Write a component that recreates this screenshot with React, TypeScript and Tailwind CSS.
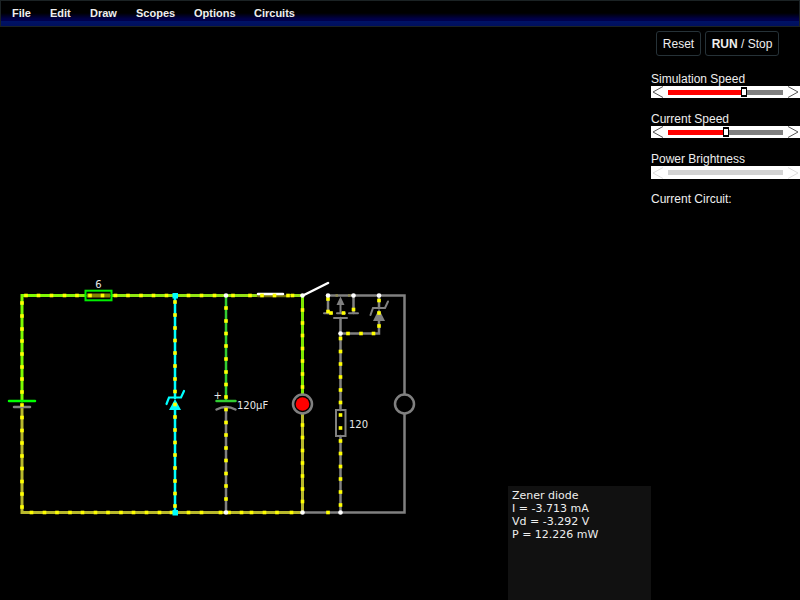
import { useState } from 'react';

interface MenuEntry {
  label: string;
  width: string;
}

const MENUS: MenuEntry[] = [
  { label: 'File', width: 'w-[38px]' },
  { label: 'Edit', width: 'w-10' },
  { label: 'Draw', width: 'w-[46px]' },
  { label: 'Scopes', width: 'w-[58px]' },
  { label: 'Options', width: 'w-[60px]' },
  { label: 'Circuits', width: 'w-[60px]' },
];

const READINGS = ['Zener diode', 'I = -3.713 mA', 'Vd = -3.292 V', 'P = 12.226 mW'];

type Point = [number, number];

// Current dots on vertical wires: x, then every y
const VERTICAL_DOTS: [number, number[]][] = [
  [22, [303, 316, 329, 341, 354, 367, 379, 392, 405, 417.5, 430.5, 443, 456, 468.5, 481.5, 494, 507]],
  [175, [302, 315, 328, 340.5, 353, 366, 379, 391.5, 404.5, 417, 430, 442.5, 455, 468, 481, 493.5, 506]],
  [226, [308, 321, 333.5, 346, 359, 372, 384.5, 397, 409.5, 422.5, 435, 448, 460.5, 473.5, 486, 499]],
  [302.5, [310, 323, 335.5, 348.5, 361, 374, 387, 425, 437.5, 450.5, 463, 476, 489, 501.5]],
  [340.5, [338.5, 351.5, 364, 377, 390, 402.5, 415, 428, 441, 453.5, 466.5, 479, 492, 505]],
  [328, [299, 311.5]],
  [353.5, [309.5]],
  [379, [300.5, 313, 326]],
];

// Current dots on horizontal wires: y, then every x
const HORIZONTAL_DOTS: [number, number[]][] = [
  [295.5, [26, 38.5, 51.5, 64.5, 77, 90, 102.5, 115.5, 128, 141, 153.5, 166.5, 188.5, 201.5, 214.5, 233, 250, 262, 274.5, 288, 292.5]],
  [512.5, [31.5, 44.5, 57, 70, 82.5, 95.5, 108, 121, 133.5, 146.5, 159.5, 171.5, 188.5, 201.5, 220.5, 229, 241.5, 251.5, 264.5, 277, 291.5, 328]],
  [313, [331, 343.5]],
  [333.5, [348, 361, 373.5]],
];

const POSTS: Point[] = [
  [226, 295.5], [302.5, 295.5], [328, 295.5], [353.5, 295.5], [379, 295.5],
  [340.5, 333.5], [226, 512.5], [302.5, 512.5], [340.5, 512.5],
];

function Dot({ x, y }: { x: number; y: number }) {
  return <rect x={x - 1.8} y={y - 1.8} width="3.6" height="3.6" fill="#ffff00" />;
}

function Circuit() {
  return (
    <svg
      viewBox="0 270 420 330"
      className="h-[330px] w-[420px] shrink-0"
      fill="none"
      strokeWidth="2.5"
      strokeLinecap="round"
      role="img"
      aria-label="Circuit"
    >
      <defs>
        <linearGradient id="supply" gradientUnits="userSpaceOnUse" x1="22" y1="0" x2="302" y2="0">
          <stop offset="0" stopColor="#7dfc00" />
          <stop offset="0.3" stopColor="#8fea10" />
          <stop offset="1" stopColor="#96dc18" />
        </linearGradient>
      </defs>

      {/* return path */}
      <path d="M22 407V512.5H302" stroke="#b8b82c" strokeWidth="3" />
      <path d="M302.5 414V512" stroke="#b8b82c" strokeWidth="3" />
      {/* supply rail */}
      <path d="M22 401V295.5H85M112 295.5H258M290 295.5H302" stroke="url(#supply)" strokeWidth="3" />
      <path d="M302.5 296V394" stroke="#7ee800" strokeWidth="3" />
      <path d="M258 296H290" stroke="#75750a" />

      {/* idle wires */}
      <g stroke="#808080">
        <path d="M302 512.5H404.5V414M404.5 394V295.5H328" />
        <path d="M226 409V512" />
        <path d="M340.5 318V410M340.5 436V512M341 333.5H379V319M379 308V296" />
        <path d="M328 296V313M353.5 296V313" />
      </g>
      <path d="M335.5 295.5H338M348 295.5H350.5" stroke="#8f8a50" strokeLinecap="butt" />

      {/* battery */}
      <path d="M9 401H35" stroke="#00ff00" />
      <path d="M14 407H30" stroke="#808080" />

      {/* 6 ohm resistor */}
      <path d="M87 295.5H110" stroke="#858500" strokeWidth="4" strokeLinecap="butt" />
      <rect x="85.5" y="290.7" width="26" height="9.6" stroke="#00ee00" strokeWidth="2" />

      {/* zener, selected */}
      <g stroke="#00ffff">
        <path d="M175 296V398M175 409V512" />
        <path d="M166.5 404L169 397.5H181L184 391" strokeWidth="2.2" />
        <path d="M175 399L169 410H181Z" fill="#00ffff" stroke="none" />
      </g>

      {/* capacitor */}
      <path d="M226 296V401M216.5 401H235.5" stroke="#32cc32" />
      <path d="M216.5 409.5Q226 404.5 235.5 409.5" stroke="#808080" />

      {/* switch */}
      <path d="M258 294H283" stroke="#ffffff" />
      <path d="M303 295.5L328 283" stroke="#ffffff" />

      {/* mosfet */}
      <g stroke="#808080" strokeWidth="2">
        <path d="M324 313.2H332M337 313.2H345M349 313.2H358M334 318H347M340.5 302V313" />
        <path d="M340.5 296.5L336.5 305H344.5Z" fill="#808080" stroke="none" />
      </g>

      {/* body diode */}
      <path d="M370.5 315L373 308H385L388 301.5" stroke="#808080" strokeWidth="2" />
      <path d="M379 309L373 321H385Z" fill="#808080" />

      {/* lamp, 120 ohm load, meter */}
      <circle cx="302.5" cy="404" r="9.5" stroke="#808080" />
      <circle cx="302.5" cy="404" r="6.8" fill="#ff0000" />
      <rect x="336" y="410" width="9.5" height="26" stroke="#808080" strokeWidth="2" />
      <circle cx="404.5" cy="404" r="9.5" stroke="#808080" />

      {VERTICAL_DOTS.map(([x, ys]) => ys.map((y) => <Dot key={`v${x}-${y}`} x={x} y={y} />))}
      {HORIZONTAL_DOTS.map(([y, xs]) => xs.map((x) => <Dot key={`h${y}-${x}`} x={x} y={y} />))}
      {POSTS.map(([x, y]) => (
        <circle key={`${x}-${y}`} cx={x} cy={y} r="2.3" fill="#ffffff" />
      ))}
      <rect x="172.5" y="293" width="5.5" height="5.5" fill="#00ffff" />
      <rect x="172.5" y="510" width="5.5" height="5.5" fill="#00ffff" />

      <g fill="#e8e8e8" fontFamily="'DejaVu Sans', sans-serif" fontSize="10">
        <text x="98.5" y="288" textAnchor="middle">6</text>
        <text x="213.5" y="399">+</text>
        <text x="237" y="409">120μF</text>
        <text x="349" y="428">120</text>
      </g>
    </svg>
  );
}

interface ScrollSliderProps {
  label: string;
  initial: number;
  disabled?: boolean;
}

function ScrollSlider({ label, initial, disabled }: ScrollSliderProps) {
  const [value, setValue] = useState(initial);
  const arrowColor = disabled ? '#dddddd' : '#555555';

  return (
    <div className="h-10">
      <label className="block text-[12px] leading-[14px]">
        {label}
        <span className={disabled ? 'flex h-[13px] items-center bg-white' : 'flex h-3 items-center bg-white'}>
          <svg viewBox="0 0 17 12" className="h-3 w-[17px] shrink-0" fill="none" stroke={arrowColor}>
            <path d="M12 0.5L2 6L12 11.5" />
          </svg>
          <span className="grid min-w-0 flex-1 items-center">
            <span className={disabled ? 'col-start-1 row-start-1 h-[5px] bg-[#d3d3d3]' : 'col-start-1 row-start-1 h-[5px] bg-[#808080]'}>
              {!disabled && <span className="block h-[5px] bg-[#ff0000]" style={{ width: `${value}%` }} />}
            </span>
            <input
              type="range"
              min={0}
              max={100}
              value={value}
              disabled={disabled}
              onChange={(e) => setValue(Number(e.target.value))}
              className={
                disabled
                  ? 'col-start-1 row-start-1 h-3 w-full appearance-none bg-transparent [&::-webkit-slider-thumb]:invisible'
                  : 'col-start-1 row-start-1 h-3 w-full appearance-none bg-transparent [&::-webkit-slider-thumb]:h-[10px] [&::-webkit-slider-thumb]:w-[6px] [&::-webkit-slider-thumb]:appearance-none [&::-webkit-slider-thumb]:border-2 [&::-webkit-slider-thumb]:border-x-[1px] [&::-webkit-slider-thumb]:border-black [&::-webkit-slider-thumb]:bg-white'
              }
            />
          </span>
          <svg viewBox="0 0 17 12" className="h-3 w-[17px] shrink-0" fill="none" stroke={arrowColor}>
            <path d="M5 0.5L15 6L5 11.5" />
          </svg>
        </span>
      </label>
    </div>
  );
}

export default function App() {
  return (
    <div className="flex min-h-screen flex-col bg-black font-['Liberation_Sans',Arial,sans-serif] text-[#eeeeee]">
      <nav className="flex h-[27px] items-center border border-[#1b2224] bg-[linear-gradient(#000_0px,#000_12px,#00004a_18px,#00004a_20px,#001266_20px,#00105c_100%)] pl-[11px] text-[11px] font-bold">
        {MENUS.map((menu) => (
          <button key={menu.label} type="button" className={`${menu.width} text-left`}>
            {menu.label}
          </button>
        ))}
      </nav>

      <div className="flex flex-1">
        <main className="flex min-w-0 flex-1 items-end justify-between">
          <Circuit />
          <div className="h-[114px] w-[143px] shrink-0 bg-[#111111] px-1 pt-[3px] font-['DejaVu_Sans',sans-serif] text-[11px] leading-[13px]">
            {READINGS.map((line) => (
              <p key={line}>{line}</p>
            ))}
          </div>
        </main>

        <aside className="w-[149px] shrink-0 pt-1">
          <div className="flex gap-1 pl-[5px] text-[12px]">
            <button type="button" className="h-[25px] w-[45px] rounded-[3px] border border-[#263238]">
              Reset
            </button>
            <button type="button" className="h-[25px] w-[74px] rounded-[3px] border border-[#263238]">
              <b>RUN</b> / Stop
            </button>
          </div>
          <div className="pt-4">
            <ScrollSlider label="Simulation Speed" initial={67} />
            <ScrollSlider label="Current Speed" initial={50} />
            <ScrollSlider label="Power Brightness" initial={50} disabled />
            <p className="text-[12px] leading-[14px]">Current Circuit:</p>
          </div>
        </aside>
      </div>
    </div>
  );
}
